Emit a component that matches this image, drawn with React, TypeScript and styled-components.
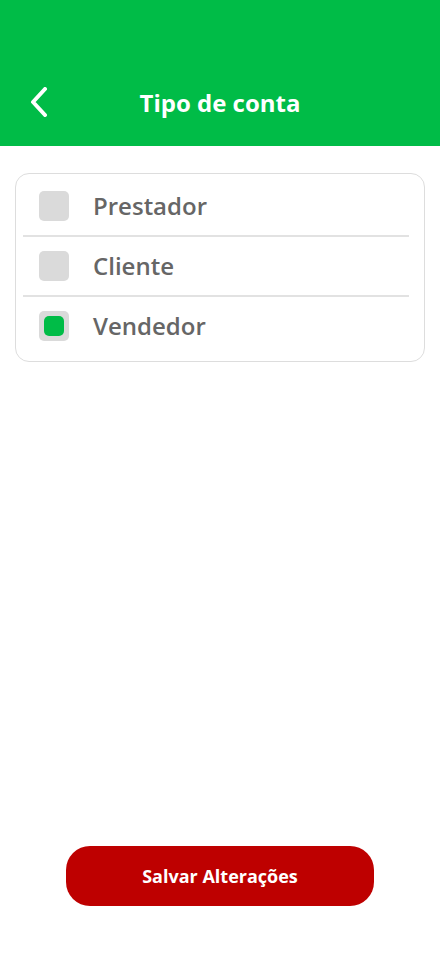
import styled, { createGlobalStyle } from "styled-components";
import { useState } from "react";

const GlobalStyle = createGlobalStyle`
  * {
    box-sizing: border-box;
  }
  body {
    margin: 0;
    background: #ffffff;
    font-family: "Open Sans", "Noto Sans", sans-serif;
  }
`;

const Screen = styled.div`
  display: flex;
  flex-direction: column;
  width: 440px;
  height: 956px;
  background: #ffffff;
`;

const Header = styled.header`
  position: relative;
  display: flex;
  align-items: flex-end;
  justify-content: center;
  height: 146px;
  padding-bottom: 28px;
  background: #00bc47;
`;

const BackButton = styled.button`
  position: absolute;
  left: 26px;
  bottom: 26px;
  width: 26px;
  height: 36px;
  padding: 0;
  border: none;
  background: none;
  display: flex;
  align-items: center;
  justify-content: center;
  cursor: pointer;
`;

const Title = styled.h1`
  margin: 0;
  font-size: 24px;
  font-weight: 700;
  line-height: 30px;
  color: #ffffff;
`;

const Content = styled.main`
  flex: 1;
  padding: 27px 15px 0;
`;

const Card = styled.div`
  display: flex;
  flex-direction: column;
  padding: 3px 15px 6px 7px;
  border: 1px solid #dddddd;
  border-radius: 14px;
`;

const Row = styled.label`
  display: flex;
  align-items: center;
  gap: 24px;
  padding: 14px 16px;
  cursor: pointer;
`;

const Divider = styled.div`
  height: 2px;
  background: #e2e2e2;
`;

const Box = styled.span<{ checked: boolean }>`
  display: flex;
  align-items: center;
  justify-content: center;
  width: 30px;
  height: 30px;
  border-radius: 5px;
  background: #dadada;

  &::after {
    content: "";
    display: ${(props) => (props.checked ? "block" : "none")};
    width: 20px;
    height: 20px;
    border-radius: 5px;
    background: #00bc47;
  }
`;

const Label = styled.span`
  font-size: 24px;
  font-weight: 600;
  line-height: 30px;
  color: #666666;
`;

const Footer = styled.footer`
  display: flex;
  justify-content: center;
  padding-bottom: 50px;
`;

const SaveButton = styled.button`
  width: 308px;
  height: 60px;
  border: none;
  border-radius: 24px;
  background: #be0000;
  color: #ffffff;
  font-family: "Open Sans", "Noto Sans", sans-serif;
  font-size: 18px;
  font-weight: 700;
  cursor: pointer;
`;

const options = ["Prestador", "Cliente", "Vendedor"];

function App() {
  const [selected, setSelected] = useState("Vendedor");

  return (
    <>
      <GlobalStyle />
      <Screen>
        <Header>
          <BackButton aria-label="Voltar">
            <svg width="18" height="30" viewBox="0 0 18 30" fill="none">
              <polyline
                points="15,2 3,15 15,28"
                stroke="#ffffff"
                strokeWidth="4"
                strokeLinecap="round"
                strokeLinejoin="round"
              />
            </svg>
          </BackButton>
          <Title>Tipo de conta</Title>
        </Header>
        <Content>
          <Card>
            {options.map((option, i) => (
              <div key={option}>
                {i > 0 && <Divider />}
                <Row onClick={() => setSelected(option)}>
                  <Box checked={selected === option} />
                  <Label>{option}</Label>
                </Row>
              </div>
            ))}
          </Card>
        </Content>
        <Footer>
          <SaveButton>Salvar Alterações</SaveButton>
        </Footer>
      </Screen>
    </>
  );
}

export default App;
